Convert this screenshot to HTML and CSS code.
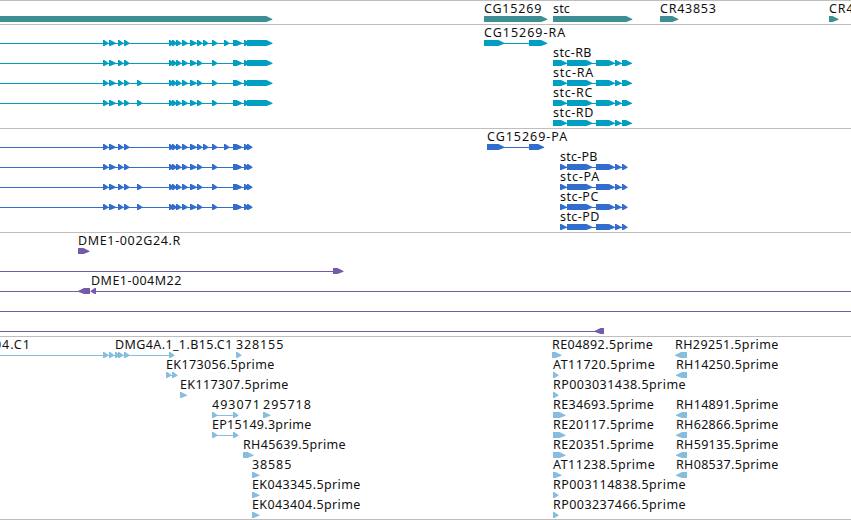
FILE: index.html
```html
<!DOCTYPE html>
<html lang="en">
<head>
<meta charset="utf-8">
<title>Genome tracks</title>
<link rel="stylesheet" href="styles.css">
</head>
<body>
<main class="viewer" id="viewer"></main>
<script src="tracks.js"></script>
</body>
</html>
```
FILE: styles.css
```css
body {
  margin: 0;
  background: #fff;
  overflow: hidden;
}
.viewer {
  display: flex;
  flex-direction: column;
  width: 851px;
  height: 520px;
  overflow: hidden;
}
.track {
  display: flex;
  flex-direction: column;
  padding-bottom: 3px;
  border-top: 1px solid #bebebe;
}
.track.est {
  padding-bottom: 2px;
  border-bottom: 1px solid #bebebe;
}
.row {
  display: block;
  flex: none;
  width: 851px;
  height: 20px;
  overflow: visible;
}
.row text {
  font: 12.5px "Noto Sans", "DejaVu Sans", sans-serif;
  fill: #111;
}
.gene { color: #3d8f94; }
.transcript { color: #009ec1; }
.protein { color: #306dcd; }
.clone { color: #735ba8; }
.est { color: #87bddf; }
.intron, .exon { fill: currentColor; }
```
FILE: tracks.js
```javascript
// Each row: lines [x1, x2], forward arrows [x1, x2], reverse arrows [x1, x2], labels [x, text, right edge]
const head = [[103, 108.5], [109, 116], [118, 123.5], [124, 129.5]];
const extra = [[137, 142.5]];
const mid = [[169, 174], [172, 177], [176, 181.5], [182, 188], [190, 197], [197, 202.5]];
const rnaEnd = [[233, 242.5], [244, 249], [247, 272.5]];
const cdsEnd = [[233, 242.5], [244, 249], [247, 252.5]];
const first = [[203, 208.5], [212, 217.5], [224, 229.5]];
const later = [[212, 217.5]];
const stcR = [[553, 567], [567, 592.5], [596, 615], [615, 621.5], [622, 632]];
const stcP = [[560, 567], [567, 592.5], [596, 615], [615, 621.5], [622, 627.5]];

function modelRows(gene, geneLabelEnd, stc, end, kind, geneX, stcX, geneEnd, ends) {
  const names = ['B', 'A', 'C', 'D'];
  const rows = [];
  for (let i = 0; i < 5; i++) {
    const row = { lines: [], fwd: [], labels: [] };
    if (i < 4) {
      row.lines.push([0, end[2][0]]);
      row.fwd.push(...head, ...(i > 1 ? extra : []), ...mid, ...(i ? later : first), ...end);
    }
    if (i === 0) {
      row.lines.push([geneX, 530]);
      row.fwd.push([geneX, 504.5], [529, geneEnd]);
      row.labels.push([geneX, gene, geneLabelEnd]);
    } else {
      row.lines.push([stcX, 623]);
      row.fwd.push(...stc);
      row.labels.push([stcX, 'stc-' + kind + names[i - 1], ends[i - 1]]);
    }
    rows.push(row);
  }
  return rows;
}

const tracks = [
  { kind: 'gene', rows: [{
    fwd: [[0, 272.3], [484, 547.3], [553, 632.3], [660, 678.3], [829, 838.5]],
    labels: [[484, 'CG15269', 541], [553, 'stc', 569.5], [660, 'CR43853', 715.5], [829, 'CR43854', 884.5]] }] },
  { kind: 'transcript', rows: modelRows('CG15269-RA', 565, stcR, rnaEnd, 'R', 484, 553, 547.2, [591.2, 593, 592, 593]) },
  { kind: 'protein', rows: modelRows('CG15269-PA', 567, stcP, cdsEnd, 'P', 487, 560, 544.2, [597.2, 599, 598, 599]) },
  { kind: 'clone', rows: [
    { fwd: [[78, 89.5]], labels: [[78, 'DME1-002G24.R', 180]] },
    { lines: [[0, 334]], fwd: [[333, 343.5]] },
    { lines: [[0, 80], [94, 851]], rev: [[78, 90], [90.5, 96]], labels: [[91, 'DME1-004M22', 181]] },
    { lines: [[0, 851]] },
    { lines: [[0, 596]], rev: [[594.5, 604]] }] },
  { kind: 'est', rows: [
    { lines: [[0, 170]], fwd: [[103, 108.5], [109, 114], [115, 120], [118, 123.5], [124, 129.5], [169, 174.5], [236, 241.5], [552, 561.5]],
      rev: [[675, 687]],
      labels: [[-6, '04.C1', 29.5], [115, 'DMG4A.1_1.B15.C1', 232], [236, '328155', 283], [552, 'RE04892.5prime', 652.5], [675, 'RH29251.5prime', 778]] },
    { lines: [[166, 173]], fwd: [[166, 171.5], [172, 177.5], [553, 558.5]], rev: [[676, 687]],
      labels: [[166, 'EK173056.5prime', 274], [553, 'AT11720.5prime', 654.5], [676, 'RH14250.5prime', 778]] },
    { fwd: [[180, 187], [553, 558.5]], labels: [[180, 'EK117307.5prime', 288], [553, 'RP003031438.5prime', 685.3]] },
    { lines: [[212, 234]], fwd: [[212, 217.5], [233, 238.5], [263, 270.5], [553, 565.5]], rev: [[676, 687]],
      labels: [[212, '493071', 259.5], [263, '295718', 310.5], [553, 'RE34693.5prime', 653.5], [676, 'RH14891.5prime', 778]] },
    { lines: [[212, 234]], fwd: [[212, 217.5], [233, 238.5], [553, 565.5]], rev: [[676, 687]],
      labels: [[212, 'EP15149.3prime', 311], [553, 'RE20117.5prime', 653.5], [676, 'RH62866.5prime', 778]] },
    { fwd: [[243, 253.5], [553, 565.5]], rev: [[676, 687]],
      labels: [[243, 'RH45639.5prime', 345.3], [553, 'RE20351.5prime', 653.5], [676, 'RH59135.5prime', 778]] },
    { fwd: [[252, 259.5], [553, 561.5]], rev: [[676, 687]],
      labels: [[252, '38585', 291], [553, 'AT11238.5prime', 654.5], [676, 'RH08537.5prime', 778]] },
    { fwd: [[252, 259.5], [553, 558.5]], labels: [[252, 'EK043345.5prime', 360], [553, 'RP003114838.5prime', 685.3]] },
    { fwd: [[252, 259.5], [553, 558.5]], labels: [[252, 'EK043404.5prime', 360], [553, 'RP003237466.5prime', 685.3]] }] }
];

function arrow(from, tip) {
  const dir = Math.sign(tip - from);
  const neck = tip - dir * Math.min(6, Math.abs(tip - from) - 1.2);
  return `<polygon class="exon" points="${from},15 ${neck},15 ${tip},18 ${tip},18.7 ${neck},21 ${from},21"/>`;
}

function drawRow({ lines = [], fwd = [], rev = [], labels = [] }) {
  return '<svg class="row" viewBox="0 0 851 20">' +
    lines.map(([a, b]) => `<rect class="intron" x="${a}" y="18" width="${b - a}" height="1"/>`).join('') +
    fwd.map(([a, b]) => arrow(a, b)).join('') +
    rev.map(([a, b]) => arrow(b, a)).join('') +
    labels.map(([x, t, end]) => `<text x="${x}" y="12.4" textLength="${end - x + 0.3}">${t}</text>`).join('') +
    '</svg>';
}

document.getElementById('viewer').innerHTML = tracks
  .map(t => `<section class="track ${t.kind}">${t.rows.map(drawRow).join('')}</section>`)
  .join('');
```
